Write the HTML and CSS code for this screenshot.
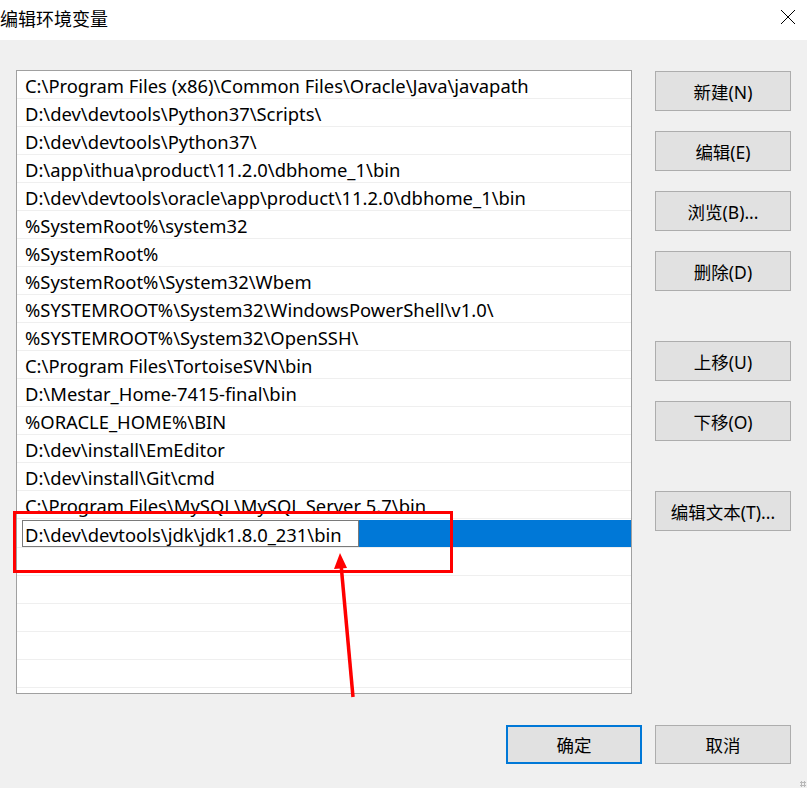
FILE: index.html
```html
<!DOCTYPE html>
<html>
<head>
<title>编辑环境变量</title>
<link rel="stylesheet" href="styles.css">
</head>
<body>

<div class="window">
  <div class="titlebar">
    <span class="title">编辑环境变量</span>
    <svg class="close" width="16" height="16" viewBox="0 0 16 16">
      <path d="M1 1 L15 15 M15 1 L1 15" stroke="#000" stroke-width="1" fill="none"/>
    </svg>
  </div>

  <div class="content">
    <div class="path-list">
      <div class="row">C:\Program Files (x86)\Common Files\Oracle\Java\javapath</div>
      <div class="row">D:\dev\devtools\Python37\Scripts\</div>
      <div class="row">D:\dev\devtools\Python37\</div>
      <div class="row">D:\app\ithua\product\11.2.0\dbhome_1\bin</div>
      <div class="row">D:\dev\devtools\oracle\app\product\11.2.0\dbhome_1\bin</div>
      <div class="row">%SystemRoot%\system32</div>
      <div class="row">%SystemRoot%</div>
      <div class="row">%SystemRoot%\System32\Wbem</div>
      <div class="row">%SYSTEMROOT%\System32\WindowsPowerShell\v1.0\</div>
      <div class="row">%SYSTEMROOT%\System32\OpenSSH\</div>
      <div class="row">C:\Program Files\TortoiseSVN\bin</div>
      <div class="row">D:\Mestar_Home-7415-final\bin</div>
      <div class="row">%ORACLE_HOME%\BIN</div>
      <div class="row">D:\dev\install\EmEditor</div>
      <div class="row">D:\dev\install\Git\cmd</div>
      <div class="row">C:\Program Files\MySQL\MySQL Server 5.7\bin</div>
      <div class="row selected">
        <div class="edit-box">D:\dev\devtools\jdk\jdk1.8.0_231\bin</div>
      </div>
      <div class="row"></div>
      <div class="row"></div>
      <div class="row"></div>
      <div class="row"></div>
      <div class="row"></div>
    </div>

    <div class="side">
      <button class="btn">新建(N)</button>
      <button class="btn">编辑(E)</button>
      <button class="btn">浏览(B)...</button>
      <button class="btn">删除(D)</button>
      <button class="btn group">上移(U)</button>
      <button class="btn">下移(O)</button>
      <button class="btn group">编辑文本(T)...</button>
    </div>
  </div>

  <div class="footer">
    <button class="btn default">确定</button>
    <button class="btn">取消</button>
  </div>

  <!-- annotation drawn over the screenshot -->
  <div class="mark"></div>
  <svg class="arrow" width="807" height="788" viewBox="0 0 807 788">
    <line x1="353" y1="697" x2="341" y2="564" stroke="#f00" stroke-width="3.5"/>
    <polygon points="340,553 334,569 347,568" fill="#f00"/>
  </svg>

  <div class="grip"></div>
</div>

</body>
</html>
```

FILE: styles.css
```css
body {
  margin: 0;
  background-color: #f0f0f0;
  font-family: "Noto Sans", "Noto Sans CJK SC", sans-serif;
}
.window {
  position: relative;
  width: 807px;
  height: 788px;
  overflow: hidden;
  background-color: #f0f0f0;
}
.titlebar {
  height: 40px;
  background-color: #fff;
  display: flex;
  align-items: center;
  justify-content: space-between;
}
.title {
  font-family: "Noto Sans CJK SC", sans-serif;
  font-size: 18px;
  margin-top: -4px;
  color: #000;
}
.close {
  margin-right: 11px;
  margin-top: -6px;
}
.content {
  display: flex;
  padding: 30px 0 0 16px;
}
.path-list {
  width: 614px;
  height: 622px;
  border: 1px solid #a0a0a0;
  background-color: #fff;
  overflow: hidden;
}
.row {
  height: 27px;
  border-bottom: 1px solid #efefef;
  padding-left: 8px;
  font-size: 18.4px;
  line-height: 30px;
  color: #000;
  white-space: nowrap;
}
.row.selected {
  padding-left: 5px;
  background: linear-gradient(to right, #fff 5px, #0078d7 5px);
}
.edit-box {
  width: 333px;
  height: 25px;
  margin-top: 1px;
  border: 1px solid #7a7a7a;
  background-color: #fff;
  padding-left: 2px;
  line-height: 27px;
}
.side {
  display: flex;
  flex-direction: column;
  gap: 20px;
  margin-left: 23px;
  padding-top: 1px;
}
.btn {
  width: 136px;
  height: 40px;
  background-color: #e1e1e1;
  border: 1px solid #adadad;
  font-family: "Noto Sans", "Noto Sans CJK SC", sans-serif;
  font-size: 17.5px;
  color: #000;
  padding: 0;
}
.side .group {
  margin-top: 30px;
}
.footer {
  display: flex;
  justify-content: flex-end;
  gap: 13px;
  padding: 31px 16px 0 0;
}
.footer .btn {
  height: 39px;
}
.btn.default {
  border: 2px solid #0078d7;
}
.mark {
  position: absolute;
  left: 13px;
  top: 511px;
  width: 434px;
  height: 56px;
  border: 3px solid #f00;
}
.arrow {
  position: absolute;
  left: 0;
  top: 0;
}
.grip {
  position: absolute;
  right: 1px;
  bottom: 1px;
  width: 6px;
  height: 6px;
  background-image: radial-gradient(#b8b8b8 1px, transparent 1.2px);
  background-size: 3px 3px;
}
```
